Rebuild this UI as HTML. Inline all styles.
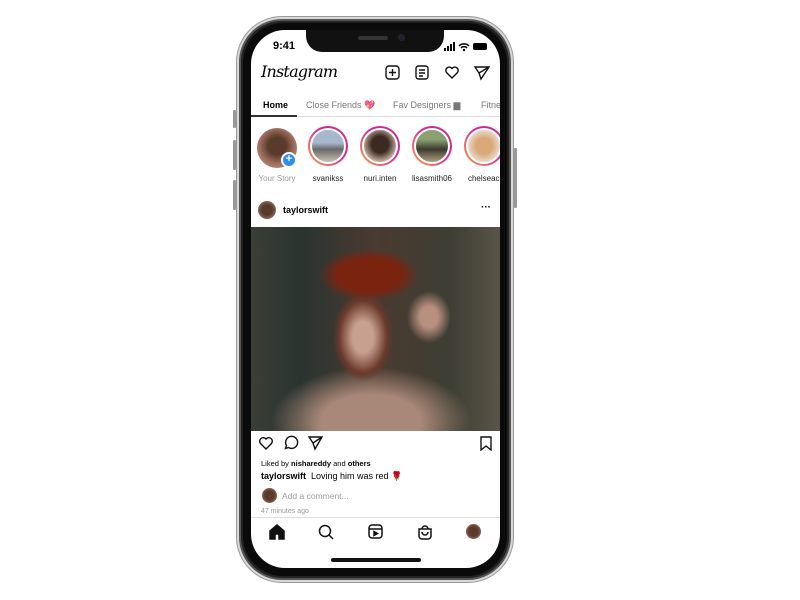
<!DOCTYPE html>
<html><head><style>
*{margin:0;padding:0;box-sizing:border-box}
body{width:800px;height:600px;background:#fff;position:relative;overflow:hidden;font-family:"Liberation Sans",sans-serif}
.frame{position:absolute;left:236px;top:16px;width:278px;height:567px;border-radius:46px;background:#d8d8d8;border:1px solid #999}
.frame2{position:absolute;left:239px;top:19px;width:272px;height:561px;border-radius:43px;background:#222;border:2px solid #555}
.frame3{position:absolute;left:243px;top:23px;width:264px;height:553px;border-radius:40px;background:#0a0a0a}
.btn{position:absolute;background:#999;width:3px;border-radius:1px}
.screen{position:absolute;left:251px;top:30px;width:249px;height:538px;border-radius:34px;background:#fff;overflow:hidden}
.notch{position:absolute;left:55px;top:0;width:138px;height:22px;background:#111;border-radius:0 0 16px 16px}
.abs{position:absolute}
.t{position:absolute;white-space:nowrap}
.ring{position:absolute;width:40px;height:40px;border-radius:50%;background:linear-gradient(45deg,#f9a03f,#d6249f 60%,#c13584);padding:2px}
.ring div{width:100%;height:100%;border-radius:50%;border:2px solid #fff}
.lbl{position:absolute;font-size:8px;color:#222;width:56px;text-align:center}
</style></head><body>
<div class="frame"></div><div class="frame2"></div><div class="frame3"></div>
<div class="btn" style="left:233px;top:110px;height:18px"></div>
<div class="btn" style="left:233px;top:140px;height:30px"></div>
<div class="btn" style="left:233px;top:180px;height:30px"></div>
<div class="btn" style="left:514px;top:148px;height:60px"></div>
<div class="screen">
<div class="notch"><div class="abs" style="left:52px;top:6px;width:30px;height:4px;border-radius:2px;background:#333"></div><div class="abs" style="left:92px;top:4px;width:7px;height:7px;border-radius:50%;background:#223"></div></div>
<div class="t" style="left:22px;top:10px;font-size:11px;font-weight:bold">9:41</div>
<svg class="abs" style="left:193px;top:12px" width="46" height="10"><rect x="0" y="6" width="2" height="3"/><rect x="3" y="4" width="2" height="5"/><rect x="6" y="2" width="2" height="7"/><rect x="9" y="0" width="2" height="9"/><path d="M15 4a7 7 0 0 1 10 0M17 6a4 4 0 0 1 6 0" stroke="#000" fill="none" stroke-width="1.5"/><circle cx="20" cy="8" r="1.2"/><rect x="29" y="1" width="14" height="7" rx="2" fill="#000"/></svg>
<div class="t" style="left:10px;top:32px;font-family:'DejaVu Serif',serif;font-style:italic;font-size:16px;letter-spacing:-0.8px">Instagram</div>
<svg class="abs" style="left:134px;top:35px" width="106" height="16" fill="none" stroke="#111" stroke-width="1.4">
<rect x="1" y="1" width="13" height="13" rx="3"/><path d="M7.5 4v7M4 7.5h7"/>
<rect x="31" y="1" width="12" height="13" rx="2.5"/><path d="M34 5h6M34 8h6M34 11h4"/>
<path d="M67 13l-5.5-5.5a3 3 0 0 1 5.5-4 3 3 0 0 1 5.5 4z"/>
<path d="M90 2l14 0-8 12-2-6zM94 8l10-6"/></svg>
<div class="t" style="left:12px;top:70px;font-size:9px;font-weight:bold">Home</div>
<div class="t" style="left:55px;top:70px;font-size:9px;color:#777">Close Friends <span style="color:#e0407a">💖</span></div>
<div class="t" style="left:142px;top:70px;font-size:9px;color:#777">Fav Designers ▆</div>
<div class="t" style="left:230px;top:70px;font-size:9px;color:#777">Fitne</div>
<div class="abs" style="left:0;top:86px;width:249px;height:1px;background:#ddd"></div>
<div class="abs" style="left:0;top:85px;width:46px;height:2px;background:#333"></div>
<div class="abs" style="left:6px;top:98px;width:40px;height:40px;border-radius:50%;background:radial-gradient(circle at 50% 45%,#5a3a2a 30%,#a07060 60%,#c9a890)"></div>
<div class="abs" style="left:30px;top:122px;width:16px;height:16px;border-radius:50%;background:#2f8ff0;border:2px solid #fff;color:#fff;font-size:11px;line-height:11px;text-align:center;font-weight:bold">+</div>
<div class="lbl" style="left:-2px;top:144px;color:#999">Your Story</div>
<div class="ring" style="left:57px;top:96px"><div style="background:linear-gradient(#a8b8cc 40%,#6a6a6a 60%,#c8c0b0)"></div></div>
<div class="lbl" style="left:49px;top:144px">svanikss</div>
<div class="ring" style="left:109px;top:96px"><div style="background:radial-gradient(circle at 50% 45%,#3a2a22 35%,#c0a898 70%)"></div></div>
<div class="lbl" style="left:101px;top:144px">nuri.inten</div>
<div class="ring" style="left:161px;top:96px"><div style="background:linear-gradient(#8aa070 30%,#3a3a30 60%,#b0a080)"></div></div>
<div class="lbl" style="left:153px;top:144px">lisasmith06</div>
<div class="ring" style="left:213px;top:96px"><div style="background:radial-gradient(circle at 50% 50%,#d8a878 35%,#e8d8c8 70%)"></div></div>
<div class="lbl" style="left:207px;top:144px">chelseacu</div>
<div class="abs" style="left:7px;top:171px;width:18px;height:18px;border-radius:50%;background:radial-gradient(#5a3a2a 40%,#b09080)"></div>
<div class="t" style="left:32px;top:175px;font-size:9px;font-weight:bold">taylorswift</div>
<div class="t" style="left:230px;top:172px;font-size:10px;font-weight:bold">···</div>
<div class="abs" style="left:0;top:197px;width:249px;height:204px;background:
radial-gradient(ellipse 50px 26px at 118px 48px,#7a2410 65%,transparent 100%),
radial-gradient(ellipse 30px 45px at 112px 110px,#c8a090 35%,#6a3a2a 80%,transparent 100%),
radial-gradient(ellipse 100px 55px at 120px 195px,#a88878 50%,transparent 100%),
radial-gradient(ellipse 22px 26px at 178px 90px,#b89080 40%,transparent 100%),
linear-gradient(90deg,#3a3e36,#2a3430 20%,#4a3a30 50%,#3e3e34 80%,#5a5448)"></div>
<svg class="abs" style="left:8px;top:405px" width="235" height="16" fill="none" stroke="#111" stroke-width="1.4">
<path d="M7 14l-5.5-5.5a3 3 0 0 1 5.5-4.5 3 3 0 0 1 5.5 4.5z"/>
<path d="M26.5 13.5l1-3a6 6 0 1 1 2 2z"/>
<path d="M50 2h13l-7 12-2-6zM54 8l9-6"/>
<path d="M222 2h10v13l-5-4-5 4z"/></svg>
<div class="t" style="left:10px;top:429px;font-size:7.5px">Liked by <b>nishareddy</b> and <b>others</b></div>
<div class="t" style="left:10px;top:441px;font-size:9px"><b>taylorswift</b>&nbsp; Loving him was red <span style="color:#c02020">🌹</span></div>
<div class="abs" style="left:11px;top:458px;width:15px;height:15px;border-radius:50%;background:radial-gradient(#5a3a2a 40%,#b08070)"></div>
<div class="t" style="left:31px;top:461px;font-size:8.5px;color:#999">Add a comment...</div>
<div class="t" style="left:10px;top:478px;font-size:7px;color:#999">47 minutes ago</div>
<div class="abs" style="left:0;top:487px;width:249px;height:1px;background:#ddd"></div>
<svg class="abs" style="left:18px;top:494px" width="215" height="16" fill="none" stroke="#111" stroke-width="1.5">
<path d="M1 7l7-6 7 6v8h-5v-5h-4v5H1z" fill="#111"/>
<circle cx="56" cy="7" r="5.5"/><path d="M60 11l4 4"/>
<rect x="100" y="1" width="13" height="13" rx="3"/><path d="M100 5h13"/><path d="M105 7.5v4l3.5-2z" fill="#111"/>
<path d="M150 5h12v7a3 3 0 0 1-3 3h-6a3 3 0 0 1-3-3z"/><path d="M153 5a3 3 0 0 1 6 0M153 8a3 3 0 0 0 6 0"/></svg>
<div class="abs" style="left:215px;top:494px;width:15px;height:15px;border-radius:50%;background:radial-gradient(#5a3a2a 40%,#b08070)"></div>
<div class="abs" style="left:80px;top:528px;width:90px;height:4px;border-radius:2px;background:#111"></div>
</div>
</body></html>
